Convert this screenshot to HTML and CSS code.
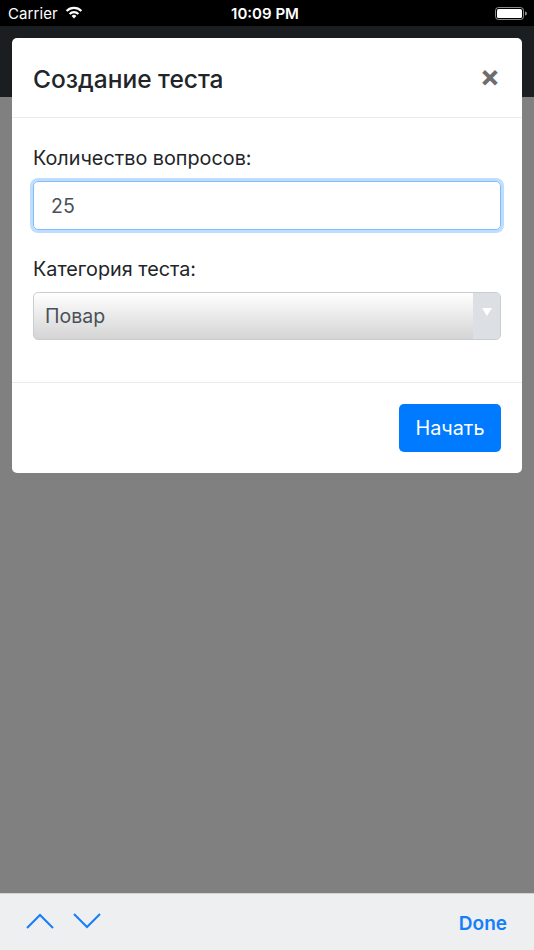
FILE: index.html
```html
<!DOCTYPE html>
<html lang="ru">
<head>
<meta charset="utf-8">
<link rel="stylesheet" href="styles.css">
</head>
<body>
<div class="screen">
  <div class="statusbar">
    <div class="sb-left">
      <span class="carrier">Carrier</span>
      <svg class="wifi" width="18" height="13" viewBox="0 0 18 13">
        <path d="M9 12.5 L6.6 10 A3.4 3.4 0 0 1 11.4 10 Z" fill="#fff"/>
        <path d="M4.6 8 A6.2 6.2 0 0 1 13.4 8" stroke="#fff" stroke-width="2.2" fill="none"/>
        <path d="M1.6 5 A10.4 10.4 0 0 1 16.4 5" stroke="#fff" stroke-width="2.2" fill="none"/>
      </svg>
    </div>
    <div class="time">10:09 PM</div>
    <div class="sb-right">
      <svg width="32" height="13" viewBox="0 0 32 13">
        <rect x="0.5" y="0.5" width="28" height="12" rx="3" fill="none" stroke="#fff" stroke-opacity="0.55"/>
        <rect x="2" y="2" width="25" height="9" rx="1.5" fill="#fff"/>
        <path d="M30 4.5 a1.5 1.5 0 0 1 0 4 z" fill="#fff" fill-opacity="0.55"/>
      </svg>
    </div>
  </div>
  <div class="app">
    <div class="navbar"></div>
    <div class="content"></div>
  </div>
  <div class="toolbar">
    <div class="arrows">
      <svg width="28" height="18" viewBox="0 0 28 18"><path d="M1 16 L14 3 L27 16" stroke="#157efb" stroke-width="2" fill="none"/></svg>
      <svg width="28" height="18" viewBox="0 0 28 18"><path d="M1 2 L14 15 L27 2" stroke="#157efb" stroke-width="2" fill="none"/></svg>
    </div>
    <span class="done">Done</span>
  </div>

  <div class="modal">
    <div class="modal-header">
      <h5 class="modal-title">Создание теста</h5>
      <span class="close">×</span>
    </div>
    <div class="modal-body">
      <div class="form-group">
        <label class="label">Количество вопросов:</label>
        <div class="input">25</div>
      </div>
      <div class="form-group">
        <label class="label">Категория теста:</label>
        <div class="select">
          <span class="select-value">Повар</span>
          <span class="select-arrow"><svg width="10" height="8" viewBox="0 0 10 8"><path d="M0 0 H10 L5 8 Z" fill="#fff"/></svg></span>
        </div>
      </div>
    </div>
    <div class="modal-footer">
      <button class="btn">Начать</button>
    </div>
  </div>
</div>
</body>
</html>
```

FILE: styles.css
```css
* { box-sizing: border-box; }
html, body { margin: 0; padding: 0; }
body {
  width: 534px;
  height: 950px;
  overflow: hidden;
  font-family: Inter, "Noto Sans", "Liberation Sans", sans-serif;
  background: #808080;
}
.screen {
  position: relative;
  width: 534px;
  height: 950px;
  display: flex;
  flex-direction: column;
}
.statusbar {
  height: 26px;
  background: #000;
  color: #fff;
  display: flex;
  align-items: center;
  justify-content: space-between;
  padding: 0 8px;
  font-size: 15px;
  position: relative;
}
.sb-left { display: flex; align-items: center; gap: 7px; }
.carrier { font-size: 15px; letter-spacing: 0.1px; }
.wifi { margin-top: -1px; }
.time {
  position: absolute;
  left: 0; right: 0;
  text-align: center;
  font-weight: 600;
  font-size: 15px;
  padding-right: 4px;
  pointer-events: none;
}
.sb-right { display: flex; align-items: center; margin-right: -1px; }
.app { flex: 1; display: flex; flex-direction: column; }
.navbar { height: 71px; background: #1b1e21; }
.content { flex: 1; background: #808080; }
.toolbar {
  height: 57px;
  background: #eeeff1;
  border-top: 1px solid #d2d3d6;
  display: flex;
  align-items: center;
  justify-content: space-between;
  padding: 0 27px 0 26px;
}
.arrows { display: flex; gap: 19px; margin-top: -2px; }
.done {
  color: #157efb;
  font-weight: 600;
  font-size: 19px;
  margin-top: 2px;
}
.modal {
  position: absolute;
  top: 38px;
  left: 12px;
  width: 510px;
  height: 435px;
  background: #fff;
  border-radius: 5px;
  display: flex;
  flex-direction: column;
  color: #212529;
}
.modal-header {
  height: 80px;
  border-bottom: 1px solid #e9ecef;
  display: flex;
  align-items: center;
  justify-content: space-between;
  padding: 2px 22px 0 21px;
}
.modal-title {
  margin: 0;
  font-size: 24.5px;
  font-weight: 500;
}
.close {
  font-size: 30px;
  font-weight: 700;
  color: #6d6d6d;
  line-height: 1;
  margin-top: -6px;
}
.modal-body {
  padding: 26px 21px 42px;
  border-bottom: 1px solid #e9ecef;
}
.form-group { margin-bottom: 25px; }
.form-group:last-child { margin-bottom: 0; }
.label {
  display: block;
  font-size: 19.8px;
  line-height: 28px;
  margin-bottom: 9px;
}
.input {
  height: 49px;
  border: 1px solid #80bdff;
  border-radius: 5px;
  box-shadow: 0 0 0 3px rgba(0, 123, 255, 0.25);
  padding: 0 17px;
  display: flex;
  align-items: center;
  font-size: 19.5px;
  color: #495057;
}
.select {
  height: 48px;
  border: 1px solid #c9ccd1;
  border-radius: 5px;
  background: linear-gradient(#ffffff, #d4d4d4);
  display: flex;
  align-items: stretch;
  overflow: hidden;
}
.select-value {
  flex: 1;
  display: flex;
  align-items: center;
  padding-left: 11px;
  font-size: 19.5px;
  color: #495057;
}
.select-arrow {
  width: 27px;
  background: #dcdfe3;
  display: flex;
  align-items: flex-start;
  justify-content: center;
  padding-top: 15px;
}
.modal-footer {
  flex: 1;
  display: flex;
  align-items: center;
  justify-content: flex-end;
  padding: 0 21px;
}
.btn {
  width: 102px;
  height: 48px;
  background: #007bff;
  color: #fff;
  border: none;
  border-radius: 5px;
  font-family: inherit;
  font-size: 19.8px;
  padding: 0;
}
```
